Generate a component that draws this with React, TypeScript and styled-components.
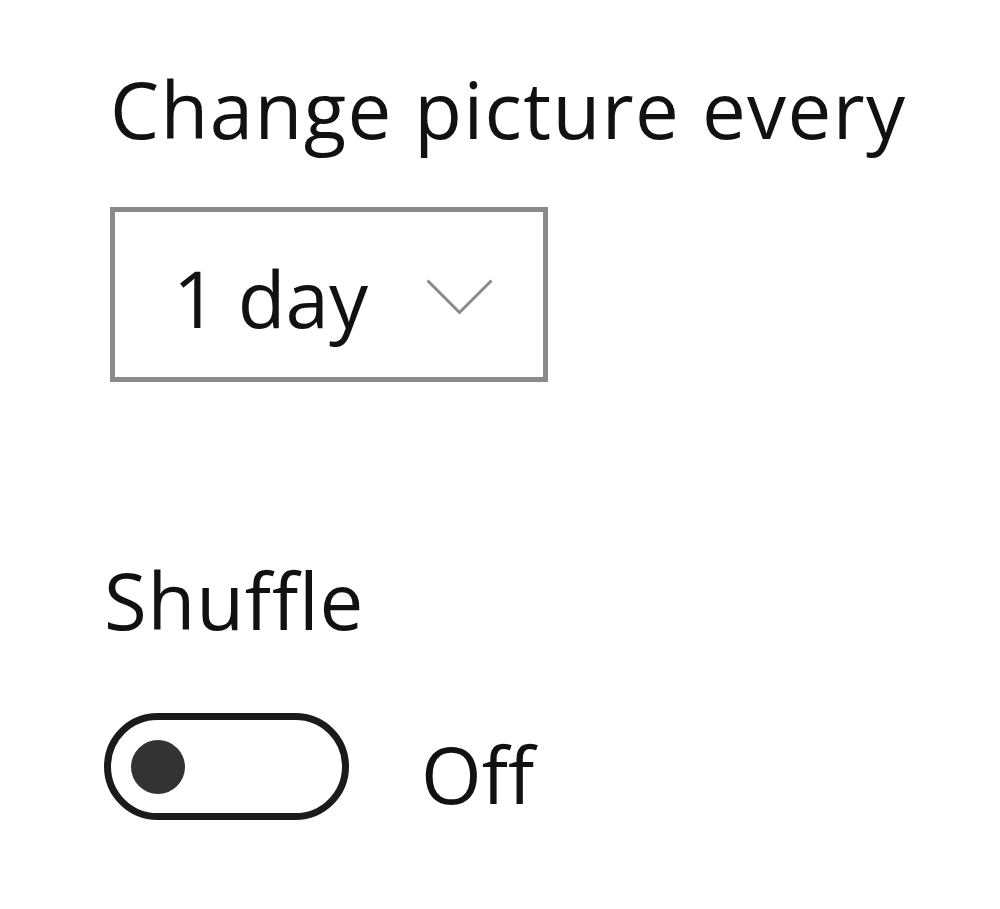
import React from "react"
import styled, { createGlobalStyle } from "styled-components"

const GlobalStyle = createGlobalStyle`
  html, body {
    margin: 0;
    padding: 0;
    background: #ffffff;
  }
  body {
    font-family: "Open Sans", "Noto Sans", sans-serif;
    color: #111111;
  }
`

export default function App() {
  return (
    <Page>
      <GlobalStyle />
      <Label $spacing={1.4}>Change picture every</Label>
      <Dropdown>
        <DropdownValue>1 day</DropdownValue>
        <Chevron viewBox="0 0 67 36" width="67" height="36">
          <polyline points="1.5,1.5 33.5,33.5 65.5,1.5" fill="none" stroke="#8a8a8a" strokeWidth="3" />
        </Chevron>
      </Dropdown>

      <Section>
        <Label $spacing={0.8}>Shuffle</Label>
        <ToggleRow>
          <Toggle>
            <Knob />
          </Toggle>
          <ToggleText>Off</ToggleText>
        </ToggleRow>
      </Section>
    </Page>
  )
}

// --- styled components ---
const Page = styled.div`
  padding: 70px 0 0 110px;
`

const Label = styled.div<{ $spacing: number }>`
  font-size: 78px;
  line-height: 78px;
  letter-spacing: ${p => p.$spacing}px;
  margin: 0;
  white-space: nowrap;
`

const Dropdown = styled.div`
  margin-top: 59px;
  box-sizing: border-box;
  width: 438px;
  height: 175px;
  border: 5px solid #8a8a8a;
  display: flex;
  align-items: center;
  padding-left: 58px;
`

const DropdownValue = styled.span`
  font-size: 78px;
  line-height: 78px;
  margin-top: 6px;
`

const Chevron = styled.svg`
  margin-left: 58px;
  margin-top: 4px;
  flex-shrink: 0;
`

const Section = styled.div`
  margin-top: 179px;
  margin-left: -6px;
`

const ToggleRow = styled.div`
  margin-top: 74px;
  display: flex;
  align-items: center;
  gap: 72px;
`

const Toggle = styled.div`
  box-sizing: border-box;
  width: 245px;
  height: 107px;
  border: 7px solid #1b1b1b;
  border-radius: 54px;
  display: flex;
  align-items: center;
  padding-left: 20px;
`

const Knob = styled.div`
  width: 54px;
  height: 54px;
  border-radius: 50%;
  background: #333333;
`

const ToggleText = styled.span`
  font-size: 78px;
  line-height: 78px;
  padding-top: 14px;
`
